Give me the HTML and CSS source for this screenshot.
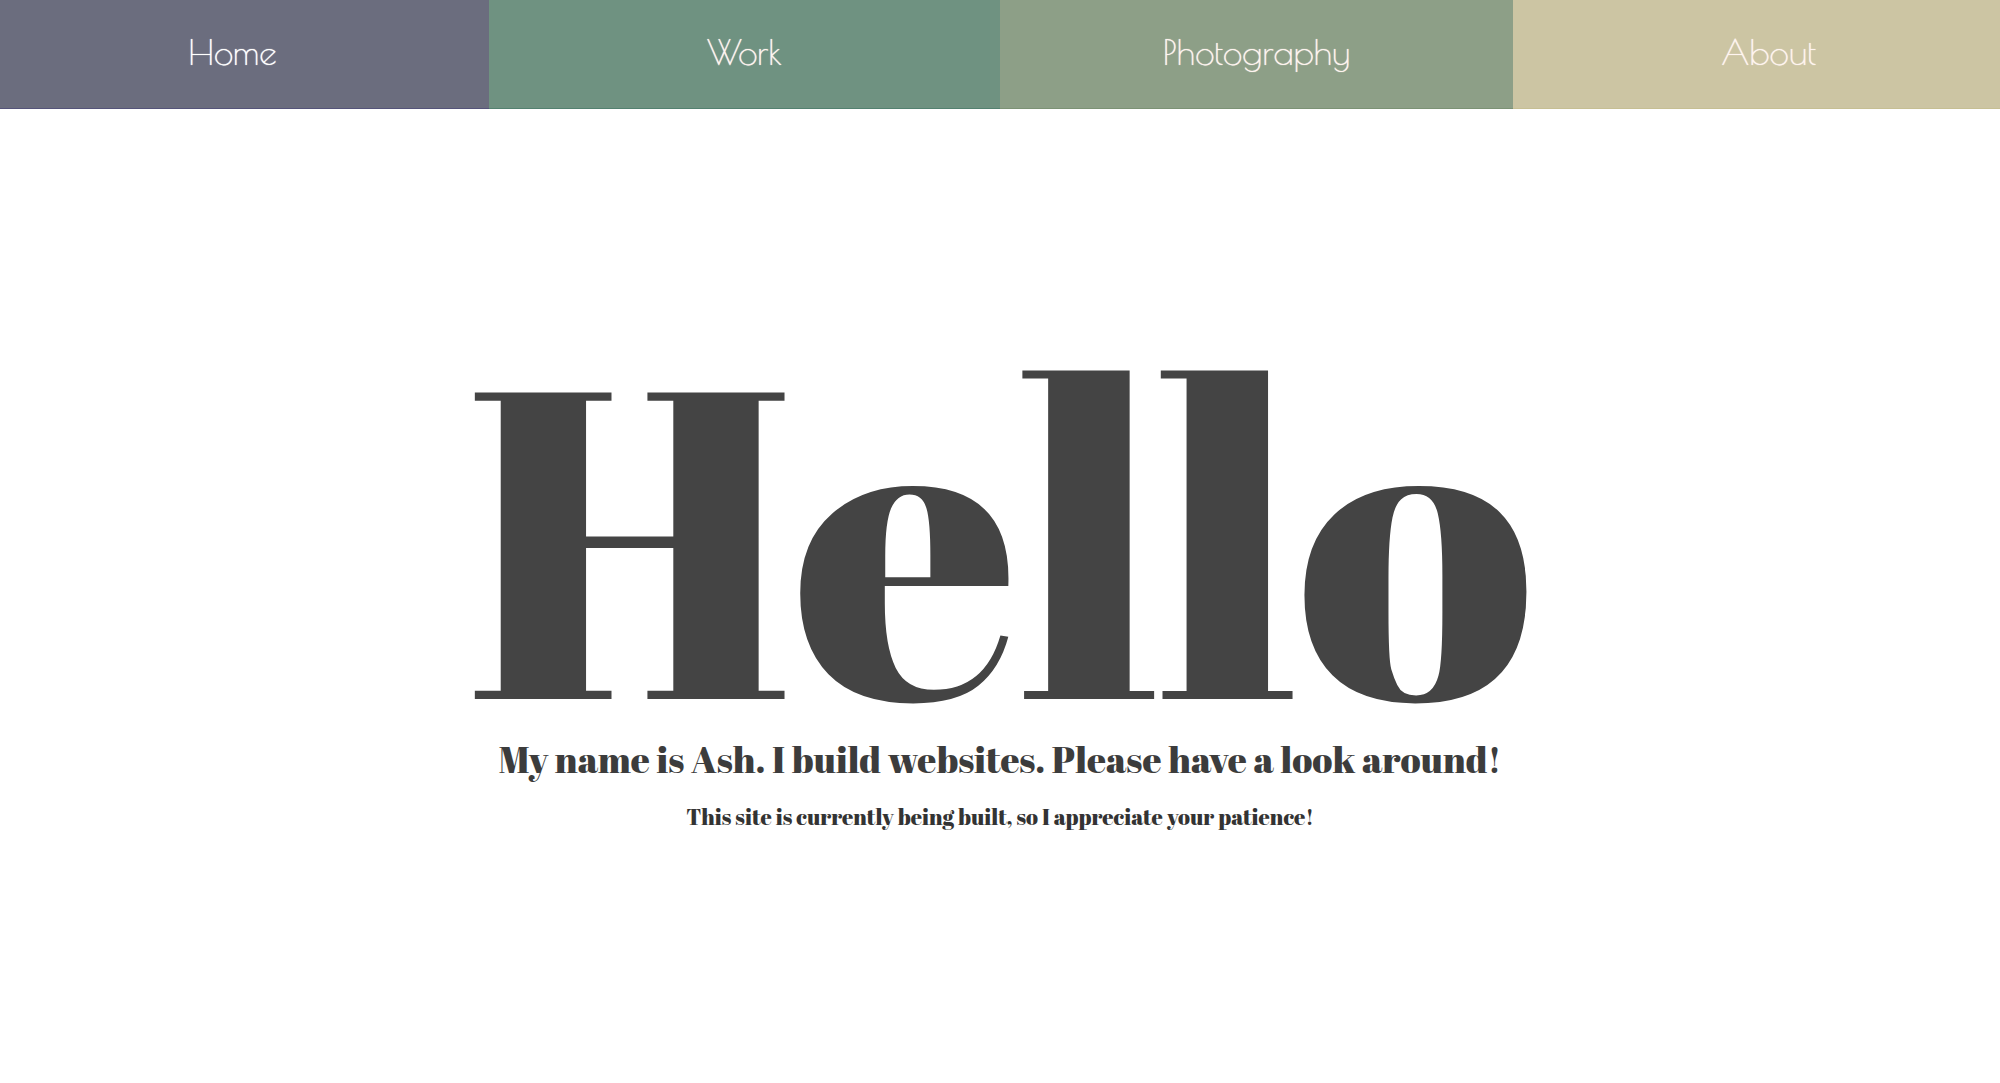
FILE: index.html
```html
<!DOCTYPE html>
<html lang="en">
<head>
<meta charset="utf-8">
<title>Ash</title>
<link rel="stylesheet" href="styles.css">
</head>
<body>
<nav class="nav">
<a class="tab home" href="#home">Home</a>
<a class="tab work" href="#work">Work</a>
<a class="tab photography" href="#photography">Photography</a>
<a class="tab about" href="#about">About</a>
</nav>
<main class="hero">
<h1 class="greeting">Hello</h1>
<h2 class="intro">My name is Ash. I build websites. Please have a look around!</h2>
<h3 class="note">This site is currently being built, so I appreciate your patience!</h3>
</main>
</body>
</html>
```
FILE: styles.css
```css
* { box-sizing: border-box; }
body { margin: 0; background: #fff; color: #444; font-family: "Abril Fatface", "Liberation Serif", serif; }
.nav { display: grid; grid-template-columns: 489fr 511fr 513fr 487fr; }
.tab { display: flex; align-items: center; justify-content: center; padding: 28px 0 33px; border-bottom: 1px solid; color: #fff5f0; text-decoration: none; text-shadow: 0 0 1px currentColor; font: 400 35px/47px "Poiret One", Lato, sans-serif; }
.home { background: #6b6d7e; border-color: #55547a; padding-right: 24px; color: #fff; }
.work { background: #6f9281; border-color: #538170; }
.photography { background: #8d9f87; border-color: #7c9275; }
.about { background: #ccc5a3; border-color: #c6bf93; padding-left: 24px; }
.hero { padding-top: 221px; text-align: center; }
.greeting, .intro, .note { margin: 0; font-weight: 400; }
.greeting { font-size: 438px; line-height: 402px; }
.intro { font-size: 37px; line-height: 55px; color: #3c3c3c; }
.note { font-size: 22px; line-height: 60px; color: #333; }
```
